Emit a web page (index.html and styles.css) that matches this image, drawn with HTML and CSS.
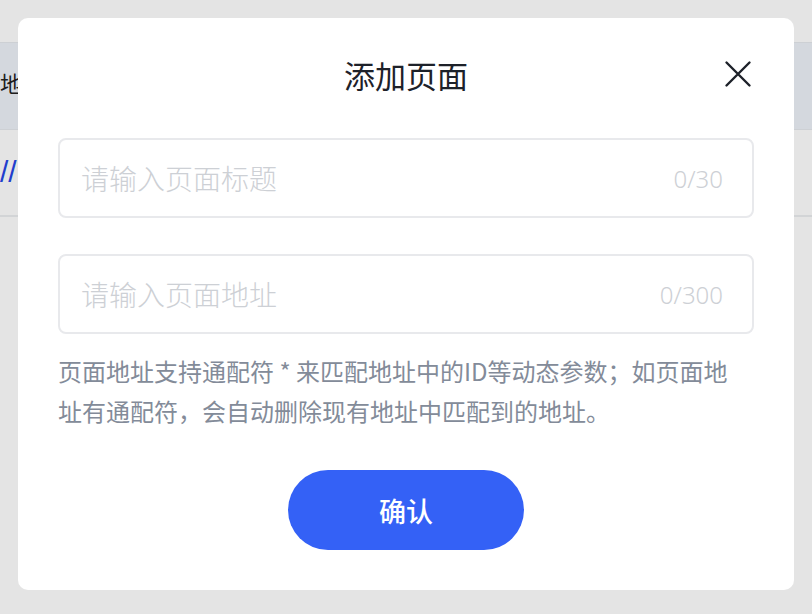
FILE: index.html
```html
<!DOCTYPE html>
<html lang="zh-CN">
<head>
<meta charset="utf-8">
<title>添加页面</title>
<link rel="stylesheet" href="styles.css">
</head>
<body>
<div class="page">
  <div class="table">
    <div class="table-head"><span class="cell-text">地址</span></div>
    <div class="table-row"><span class="cell-link">//</span></div>
  </div>
</div>
<div class="overlay">
  <div class="modal">
    <div class="modal-header">
      <span></span>
      <h2 class="modal-title">添加页面</h2>
      <button class="close-btn" aria-label="关闭">
        <svg width="32" height="32" viewBox="0 0 32 32"><path d="M4.5 4.5 L27.5 27.5 M27.5 4.5 L4.5 27.5" stroke="#1d2129" stroke-width="2.4" stroke-linecap="round" fill="none"/></svg>
      </button>
    </div>
    <div class="fields">
      <label class="field">
        <input class="field-input" type="text" placeholder="请输入页面标题">
        <span class="field-count">0/30</span>
      </label>
      <label class="field">
        <input class="field-input" type="text" placeholder="请输入页面地址">
        <span class="field-count">0/300</span>
      </label>
    </div>
    <p class="help">页面地址支持通配符 * 来匹配地址中的ID等动态参数；如页面地址有通配符，会自动删除现有地址中匹配到的地址。</p>
    <div class="actions">
      <button class="confirm-btn">确认</button>
    </div>
  </div>
</div>
</body>
</html>
```

FILE: styles.css
```css
* { box-sizing: border-box; }
html, body { margin: 0; padding: 0; }
body {
  width: 812px;
  height: 614px;
  overflow: hidden;
  background: #ffffff;
  font-family: "Noto Sans CJK SC", "Noto Sans", sans-serif;
}
.page { padding-top: 42px; }
.table-head {
  height: 88px;
  background: #eef2f9;
  border-top: 1px solid #e6e9ee;
  border-bottom: 1px solid #e6e9ee;
  display: flex;
  align-items: center;
}
.table-row {
  height: 87px;
  border-bottom: 2px solid #ebedf0;
  display: flex;
  align-items: center;
}
.cell-text {
  font-size: 22px;
  color: #222;
  margin-top: -8px;
}
.cell-link {
  font-size: 30px;
  line-height: 1;
  color: #2546e6;
  font-family: "Liberation Sans", sans-serif;
  margin-top: -2px;
}
.overlay {
  position: fixed;
  inset: 0;
  background: rgba(0, 0, 0, 0.106);
  display: flex;
  justify-content: center;
  align-items: flex-start;
  padding-top: 18px;
}
.modal {
  width: 776px;
  height: 572px;
  background: #fff;
  border-radius: 10px;
  padding: 0 40px 40px;
  display: flex;
  flex-direction: column;
}
.modal-header {
  height: 114px;
  display: grid;
  grid-template-columns: 1fr auto 1fr;
  align-items: center;
}
.modal-title {
  margin: 0;
  font-size: 31px;
  font-weight: 400;
  color: #1d2129;
  line-height: 40px;
}
.close-btn {
  justify-self: end;
  width: 32px;
  height: 32px;
  padding: 0;
  border: 0;
  background: none;
  display: flex;
  margin-top: -2px;
}
.fields {
  margin-top: 6px;
  display: flex;
  flex-direction: column;
  gap: 36px;
}
.field {
  height: 80px;
  border: 2px solid #e8e9ec;
  border-radius: 8px;
  display: flex;
  align-items: center;
  padding: 0 29px 0 21px;
}
.field-input {
  flex: 1;
  min-width: 0;
  border: 0;
  outline: none;
  font-family: inherit;
  font-size: 28px;
  font-weight: 300;
  color: #1d2129;
  padding: 0;
  background: transparent;
}
.field-input::placeholder { color: #cdd0d5; }
.field-count {
  font-size: 24px;
  color: #cdd0d5;
  font-family: "Noto Sans", sans-serif;
  font-weight: 300;
}
.help {
  margin: 17px 0 0;
  max-width: 688px;
  font-size: 24px;
  line-height: 40px;
  color: #838b99;
}
.actions {
  margin-top: auto;
  display: flex;
  justify-content: center;
}
.confirm-btn {
  width: 236px;
  height: 80px;
  border: 0;
  border-radius: 40px;
  background: #3461f6;
  color: #fff;
  font-family: inherit;
  font-size: 27px;
  font-weight: 500;
}
```
